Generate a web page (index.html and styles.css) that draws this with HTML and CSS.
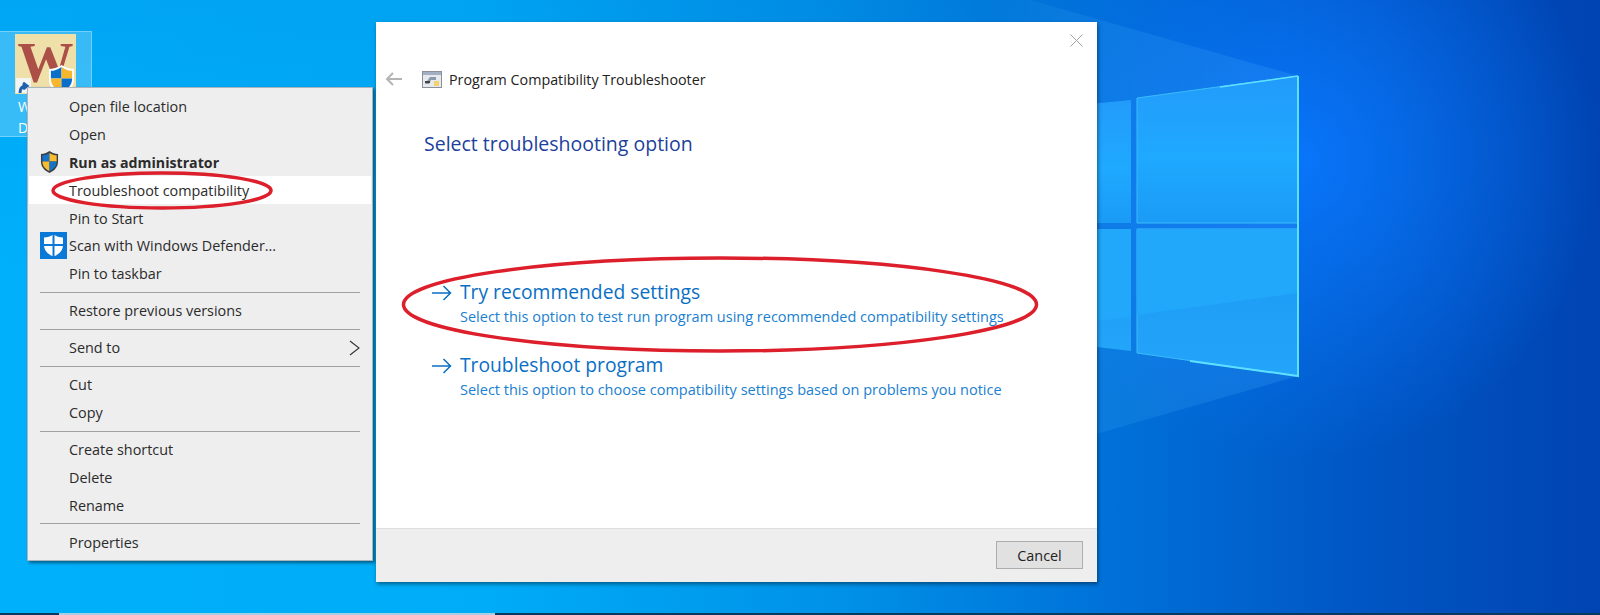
FILE: index.html
```html
<!DOCTYPE html>
<html lang="en">
<head>
    <meta charset="UTF-8">
    <title>Program Compatibility Troubleshooter</title>
    <link rel="stylesheet" href="styles.css">
</head>
<body>
    <div class="desktop">
        <!-- wallpaper -->
        <svg class="wallpaper" viewBox="0 0 1600 615" width="1600" height="615">
            <defs>
                <linearGradient id="beam" x1="980" y1="0" x2="1298" y2="0" gradientUnits="userSpaceOnUse">
                    <stop offset="0" stop-color="#4ab4ff" stop-opacity="0"/>
                    <stop offset="0.3" stop-color="#4ab4ff" stop-opacity="0.14"/>
                    <stop offset="1" stop-color="#4ab4ff" stop-opacity="0.2"/>
                </linearGradient>
                <linearGradient id="paneTop" x1="0" y1="0" x2="0" y2="1">
                    <stop offset="0" stop-color="#229bfa"/>
                    <stop offset="0.55" stop-color="#1fa9ff"/>
                    <stop offset="1" stop-color="#1a9bf6"/>
                </linearGradient>
                <linearGradient id="paneLow" x1="0" y1="0" x2="0" y2="1">
                    <stop offset="0" stop-color="#1c98f4"/>
                    <stop offset="1" stop-color="#23a5fa"/>
                </linearGradient>
                <radialGradient id="glow" cx="1300" cy="160" r="300" gradientUnits="userSpaceOnUse">
                    <stop offset="0" stop-color="#0a78ff" stop-opacity="0.9"/>
                    <stop offset="1" stop-color="#0a78ff" stop-opacity="0"/>
                </radialGradient>
            </defs>
            <rect x="900" y="0" width="700" height="500" fill="url(#glow)"/>
            <polygon points="1030,0 1298,76 1298,376 1040,450 980,450 980,0" fill="url(#beam)"/>
            <!-- logo panes -->
            <polygon points="1080,105 1131,100 1131,223 1080,223" fill="url(#paneTop)"/>
            <polygon points="1137,98 1298,76 1298,223 1137,223" fill="url(#paneTop)" stroke="#3cbcfc" stroke-width="1"/>
            <polygon points="1080,229 1131,229 1131,351 1080,345" fill="url(#paneLow)"/>
            <polygon points="1137,229 1298,229 1298,376 1137,353" fill="url(#paneLow)" stroke="#3cbcfc" stroke-width="1"/>
            <polygon points="1137,315 1298,293 1298,229 1137,229" fill="#21a8fb"/>
            <polygon points="1080,323 1131,317 1131,229 1080,229" fill="#21a8fb"/>
            <polyline points="1298,76 1298,376 1190,361" fill="none" stroke="#5fe0ff" stroke-width="2"/>
            <line x1="1220" y1="87" x2="1298" y2="76" stroke="#5fe0ff" stroke-width="1.500"/>
        </svg>

        <!-- desktop shortcut -->
        <div class="shortcut">
            <div class="shortcut-icon">
                <span class="shortcut-letter">W</span>
                <svg class="shortcut-shield" viewBox="0 0 28 32" width="27" height="31">
                    <path d="M14 1 C10 4 5 5 1 5 V16 C1 24 7 29 14 31 C21 29 27 24 27 16 V5 C23 5 18 4 14 1Z" fill="#fff"/>
                    <path d="M14 3 C10 6 6 7 3 7 V15 H14Z" fill="#0a6fc8"/>
                    <path d="M14 3 C18 6 22 7 25 7 V15 H14Z" fill="#f6b72e"/>
                    <path d="M3 15 H14 V29 C8 27 3 22 3 15Z" fill="#f6b72e"/>
                    <path d="M25 15 H14 V29 C20 27 25 22 25 15Z" fill="#0a6fc8"/>
                </svg>
                <span class="shortcut-arrow">
                    <svg viewBox="0 0 15 15" width="15" height="15">
                        <path d="M4 13 C4 8 6 6 10 6 M7 3 L11 6 L7 9" fill="none" stroke="#1e5fae" stroke-width="3"/>
                    </svg>
                </span>
            </div>
            <div class="shortcut-label">W</div>
            <div class="shortcut-label">D</div>
        </div>

        <!-- right click menu -->
        <div class="menu">
            <div class="menu-row"><span class="menu-icon"></span>Open file location</div>
            <div class="menu-row"><span class="menu-icon"></span>Open</div>
            <div class="menu-row bold">
                <span class="menu-icon">
                    <svg viewBox="0 0 20 23" width="19" height="22">
                        <path d="M10 0 C7 2 4 3 1 3 V11 C1 17 5 21 10 23 C15 21 19 17 19 11 V3 C16 3 13 2 10 0Z" fill="#3c3f45"/>
                        <path d="M10 2 C7.500 3.500 5 4.500 2.500 4.500 V11 H10Z" fill="#1573c9"/>
                        <path d="M10 2 C12.500 3.500 15 4.500 17.500 4.500 V11 H10Z" fill="#f8bd2f"/>
                        <path d="M2.500 11 H10 V21 C6 19.500 2.500 16 2.500 11Z" fill="#f8bd2f"/>
                        <path d="M17.500 11 H10 V21 C14 19.500 17.500 16 17.500 11Z" fill="#1573c9"/>
                    </svg>
                </span>
                Run as administrator
            </div>
            <div class="menu-row active"><span class="menu-icon"></span>Troubleshoot compatibility</div>
            <div class="menu-row"><span class="menu-icon"></span>Pin to Start</div>
            <div class="menu-row">
                <span class="menu-icon">
                    <svg viewBox="0 0 27 27" width="27" height="27">
                        <rect width="27" height="27" fill="#0a78d7"/>
                        <path d="M13.500 2.500 C10.500 4.500 7.500 5.500 4 5.500 V13 C4 18.500 8 22.500 13.500 24.500 C19 22.500 23 18.500 23 13 V5.500 C19.500 5.500 16.500 4.500 13.500 2.500Z" fill="#fff"/>
                        <path d="M12.500 2 H14.500 V25 H12.500Z M3 12 H24 V14 H3Z" fill="#0a78d7"/>
                    </svg>
                </span>
                Scan with Windows Defender...
            </div>
            <div class="menu-row"><span class="menu-icon"></span>Pin to taskbar</div>
            <div class="menu-sep"></div>
            <div class="menu-row"><span class="menu-icon"></span>Restore previous versions</div>
            <div class="menu-sep"></div>
            <div class="menu-row has-sub">
                <span class="menu-icon"></span>Send to
                <svg class="menu-chevron" viewBox="0 0 11 16" width="11" height="16">
                    <path d="M1 1 L10 8 L1 15" fill="none" stroke="#333" stroke-width="1.100"/>
                </svg>
            </div>
            <div class="menu-sep"></div>
            <div class="menu-row"><span class="menu-icon"></span>Cut</div>
            <div class="menu-row"><span class="menu-icon"></span>Copy</div>
            <div class="menu-sep"></div>
            <div class="menu-row"><span class="menu-icon"></span>Create shortcut</div>
            <div class="menu-row"><span class="menu-icon"></span>Delete</div>
            <div class="menu-row"><span class="menu-icon"></span>Rename</div>
            <div class="menu-sep"></div>
            <div class="menu-row"><span class="menu-icon"></span>Properties</div>
        </div>

        <!-- troubleshooter window -->
        <div class="dialog">
            <div class="dialog-main">
                <div class="dialog-top">
                    <svg viewBox="0 0 13 13" width="13" height="13">
                        <path d="M0.500 0.500 L12.500 12.500 M12.500 0.500 L0.500 12.500" stroke="#a3a3a3" stroke-width="1"/>
                    </svg>
                </div>
                <div class="dialog-nav">
                    <svg class="back-arrow" viewBox="0 0 17 14" width="17" height="14">
                        <path d="M17 7 H2 M8 1 L2 7 L8 13" fill="none" stroke="#b4b4b4" stroke-width="2"/>
                    </svg>
                    <svg class="app-icon" viewBox="0 0 20 17" width="20" height="17">
                        <rect x="0.500" y="0.500" width="19" height="16" fill="#e6e9ee" stroke="#8a8f99"/>
                        <rect x="1" y="1" width="18" height="3" fill="#a3afc2"/>
                        <path d="M3 13 L8 6 L14 6 L14 9 L9 9 L7 13Z" fill="#8b99ad"/>
                        <rect x="3" y="10" width="5" height="2" fill="#444"/>
                        <rect x="12" y="10" width="5" height="5" fill="#f2d26a"/>
                    </svg>
                    <span class="dialog-title">Program Compatibility Troubleshooter</span>
                </div>
                <h1 class="dialog-heading">Select troubleshooting option</h1>
                <div class="option first">
                    <svg class="option-arrow" viewBox="0 0 20 16" width="20" height="16">
                        <path d="M0 8 H18.500 M11.500 1 L18.500 8 L11.500 15" fill="none" stroke="#0a6fc4" stroke-width="1.500"/>
                    </svg>
                    <div>
                        <div class="option-title">Try recommended settings</div>
                        <div class="option-desc">Select this option to test run program using recommended compatibility settings</div>
                    </div>
                </div>
                <div class="option">
                    <svg class="option-arrow" viewBox="0 0 20 16" width="20" height="16">
                        <path d="M0 8 H18.500 M11.500 1 L18.500 8 L11.500 15" fill="none" stroke="#0a6fc4" stroke-width="1.500"/>
                    </svg>
                    <div>
                        <div class="option-title">Troubleshoot program</div>
                        <div class="option-desc">Select this option to choose compatibility settings based on problems you notice</div>
                    </div>
                </div>
            </div>
            <div class="dialog-footer">
                <button class="cancel-btn">Cancel</button>
            </div>
        </div>

        <!-- red marks drawn on the screenshot -->
        <svg class="marks" viewBox="0 0 1600 615" width="1600" height="615">
            <ellipse cx="162" cy="190.500" rx="109" ry="17.500" fill="none" stroke="#dc1f2b" stroke-width="3.500"/>
            <ellipse cx="720" cy="304.500" rx="316.500" ry="46.500" fill="none" stroke="#dc1f2b" stroke-width="3.500"/>
        </svg>

        <div class="taskbar"><div class="taskbar-bit"></div></div>
    </div>
</body>
</html>
```

FILE: styles.css
```css
html, body {
    margin: 0;
    padding: 0;
}
body {
    font-family: "Open Sans", "Noto Sans", Arial, sans-serif;
    color: #2b2b2b;
}
.desktop {
    position: relative;
    width: 1600px;
    height: 615px;
    overflow: hidden;
    background:
        linear-gradient(180deg, rgba(0,50,170,0.08) 0%, rgba(0,50,170,0) 45%),
        linear-gradient(90deg, #00b0fa 0%, #00acf7 30%, #0092e8 52%, #0070d8 70%, #0056c4 85%, #0044b2 100%);
}
.wallpaper, .marks {
    position: absolute;
    left: 0;
    top: 0;
}

/* shortcut */
.shortcut {
    position: absolute;
    left: 0;
    top: 31px;
    width: 92px;
    height: 106px;
    background-color: rgba(255,255,255,0.22);
    border: 1px solid rgba(255,255,255,0.3);
    border-left: none;
    box-sizing: border-box;
    padding-left: 15px;
}
.shortcut-icon {
    position: relative;
    width: 61px;
    height: 60px;
    margin-top: 2px;
    margin-bottom: 2px;
    background-color: #efe0a9;
}
.shortcut-letter {
    display: block;
    font-family: "Liberation Serif", serif;
    font-weight: bold;
    font-size: 56px;
    line-height: 58px;
    color: #ab4f47;
    text-align: center;
}
.shortcut-shield {
    position: absolute;
    right: 1px;
    bottom: -1px;
}
.shortcut-arrow {
    position: absolute;
    left: 1px;
    bottom: 1px;
    width: 15px;
    height: 15px;
    background-color: #f4f4f4;
}
.shortcut-label {
    color: #fff;
    font-size: 14px;
    line-height: 21px;
    padding-left: 3px;
}

/* context menu */
.menu {
    position: absolute;
    left: 27px;
    top: 87px;
    width: 346px;
    height: 474px;
    box-sizing: border-box;
    padding: 5px 1px;
    background-color: #eeeeee;
    border: 1px solid #a9b4bc;
    box-shadow: 2px 2px 3px rgba(0,0,0,0.45);
    font-size: 14.400px;
}
.menu-row {
    display: flex;
    align-items: center;
    height: 27.800px;
    white-space: nowrap;
}
.menu-row.bold {
    font-weight: bold;
    font-size: 14.200px;
}
.menu-row.active {
    background-color: #ffffff;
}
.menu-icon {
    display: flex;
    align-items: center;
    flex: none;
    width: 29px;
    height: 27px;
    padding-left: 11px;
}
.menu-chevron {
    margin-left: auto;
    margin-right: 11px;
}
.menu-sep {
    height: 1px;
    margin: 4px 11px 4.300px;
    background-color: #a0a0a0;
}

/* dialog */
.dialog {
    position: absolute;
    left: 376px;
    top: 22px;
    width: 721px;
    height: 560px;
    display: flex;
    flex-direction: column;
    background-color: #ffffff;
    box-shadow: 1px 2px 4px rgba(0,0,0,0.45);
}
.dialog-main {
    flex: 1;
}
.dialog-top {
    display: flex;
    justify-content: flex-end;
    padding: 12px 14px 0 0;
    height: 13px;
}
.dialog-nav {
    display: flex;
    align-items: center;
    height: 24px;
    margin-top: 20px;
    padding-left: 9px;
}
.back-arrow {
    margin-right: 20px;
}
.app-icon {
    margin-right: 7px;
}
.dialog-title {
    font-size: 14.300px;
    color: #222;
}
.dialog-heading {
    margin: 38px 0 0 48px;
    font-size: 19.500px;
    line-height: 30px;
    font-weight: normal;
    color: #1d3f9c;
}
.option {
    display: flex;
    align-items: flex-start;
    margin-left: 56px;
    margin-top: 23px;
}
.option.first {
    margin-top: 117px;
}
.option-arrow {
    flex: none;
    margin-top: 9px;
    margin-right: 8px;
}
.option-title {
    font-size: 19.250px;
    line-height: 32px;
    color: #0a6fc4;
}
.option-desc {
    font-size: 14.500px;
    line-height: 18px;
    color: #1a80d0;
    white-space: nowrap;
}
.dialog-footer {
    display: flex;
    justify-content: flex-end;
    align-items: flex-start;
    height: 54px;
    box-sizing: border-box;
    padding: 12px 14px 0 0;
    background-color: #eeeeee;
    border-top: 1px solid #dfdfdf;
}
.cancel-btn {
    width: 87px;
    height: 28px;
    padding: 0;
    font-family: inherit;
    font-size: 14.400px;
    color: #222;
    background-color: #e1e1e1;
    border: 1px solid #adadad;
}

/* taskbar */
.taskbar {
    position: absolute;
    left: 0;
    bottom: 0;
    width: 100%;
    height: 2px;
    background-color: #083a5c;
}
.taskbar-bit {
    width: 436px;
    height: 2px;
    margin-left: 59px;
    background-color: #a8cfe0;
}
```
